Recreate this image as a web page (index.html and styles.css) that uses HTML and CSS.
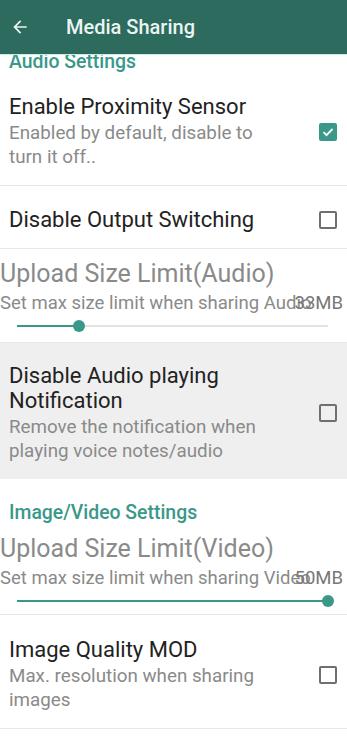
FILE: index.html
```html
<!DOCTYPE html>
<html lang="en">
<head>
    <meta charset="UTF-8">
    <meta name="viewport" content="width=device-width, initial-scale=1.0">
    <title>Media Sharing</title>
    <link rel="stylesheet" href="styles.css">
</head>
<body>
    <div class="app-bar">
        <svg class="back-icon" viewBox="0 0 24 24" width="20" height="20">
            <path d="M20 11H7.83l5.59-5.59L12 4l-8 8 8 8 1.41-1.41L7.83 13H20v-2z" fill="currentColor"/>
        </svg>
        <div class="app-title">Media Sharing</div>
    </div>

    <div class="pref-list">
        <div class="category first">Audio Settings</div>

        <div class="pref-item first">
            <div class="pref-text">
                <div class="pref-title">Enable Proximity Sensor</div>
                <div class="pref-summary">Enabled by default, disable to turn it off..</div>
            </div>
            <div class="checkbox checked">
                <svg viewBox="0 0 18 18" width="18" height="18"><path d="M4.5 9.2l3 3 6-6.2" fill="none" stroke="#fff" stroke-width="1.8"/></svg>
            </div>
        </div>

        <div class="pref-item single">
            <div class="pref-text">
                <div class="pref-title">Disable Output Switching</div>
            </div>
            <div class="checkbox"></div>
        </div>

        <div class="seek-item audio">
            <div class="seek-title">Upload Size Limit(Audio)</div>
            <div class="seek-summary">
                Set max size limit when sharing Audio
                <span class="seek-value">33MB</span>
            </div>
            <div class="slider">
                <div class="slider-fill" style="width: 20%"></div>
                <div class="slider-thumb" style="left: 20%"></div>
            </div>
        </div>

        <div class="pref-item pressed">
            <div class="pref-text">
                <div class="pref-title">Disable Audio playing Notification</div>
                <div class="pref-summary">Remove the notification when playing voice notes/audio</div>
            </div>
            <div class="checkbox"></div>
        </div>

        <div class="category">Image/Video Settings</div>

        <div class="seek-item video">
            <div class="seek-title">Upload Size Limit(Video)</div>
            <div class="seek-summary">
                Set max size limit when sharing Video
                <span class="seek-value">50MB</span>
            </div>
            <div class="slider">
                <div class="slider-fill" style="width: 100%"></div>
                <div class="slider-thumb" style="left: 100%"></div>
            </div>
        </div>

        <div class="pref-item last">
            <div class="pref-text">
                <div class="pref-title">Image Quality MOD</div>
                <div class="pref-summary">Max. resolution when sharing images</div>
            </div>
            <div class="checkbox"></div>
        </div>
    </div>
</body>
</html>
```

FILE: styles.css
```css
body {
    margin: 0;
    padding: 0;
    width: 347px;
    height: 742px;
    overflow: hidden;
    background: #fff;
    font-family: Roboto, 'Noto Sans', sans-serif;
    color: #222;
}

.app-bar {
    position: relative;
    z-index: 2;
    height: 54px;
    display: flex;
    align-items: center;
    background: #2c6b5d;
    color: #eaf5f1;
    border-bottom: 1px solid #c6ece4;
}

.back-icon {
    margin-left: 10px;
    margin-right: 36px;
}

.app-title {
    font-size: 20px;
    font-weight: 500;
}

.pref-list {
    margin-top: -5px;
}

.category {
    padding: 22px 9px 2px;
    font-size: 19.4px;
    line-height: 23px;
    font-weight: 500;
    color: #3a9888;
}

.category.first {
    padding-top: 0;
    padding-bottom: 4px;
}

.pref-item {
    display: flex;
    align-items: center;
    padding: 17px 10px 16px 9px;
    border-bottom: 1px solid #e8e8e8;
}

.pref-item.single {
    padding: 21px 10px 16px 9px;
}

.pref-item.pressed {
    background: #efefef;
    border-bottom: none;
    padding: 20px 10px 16px 9px;
}

.pref-item.last {
    padding: 22px 10px 16px 9px;
}

.pref-text {
    flex: 1;
    padding-right: 40px;
}

.pref-title {
    font-size: 22px;
    line-height: 25px;
    color: #222;
}

.pref-summary {
    margin-top: 3px;
    font-size: 18.8px;
    line-height: 23.5px;
    color: #8a8a8a;
}

.checkbox {
    width: 14px;
    height: 14px;
    border: 2px solid #6f6f6f;
    border-radius: 2px;
    flex-shrink: 0;
}

.checkbox.checked {
    width: 18px;
    height: 18px;
    border: none;
    background: #3a9888;
    display: flex;
    align-items: center;
    justify-content: center;
}

.seek-item {
    padding: 10px 0 15px;
    border-bottom: 1px solid #e8e8e8;
}

.seek-item.video {
    padding-top: 8px;
    padding-bottom: 12px;
}

.seek-title {
    font-size: 25px;
    line-height: 30px;
    color: #8a8a8a;
}

.seek-summary {
    position: relative;
    margin-top: 2px;
    font-size: 18.5px;
    line-height: 24px;
    color: #8a8a8a;
    white-space: nowrap;
}

.seek-value {
    position: absolute;
    right: 4px;
    top: 0;
    color: #777;
}

.slider {
    position: relative;
    height: 2px;
    margin: 10px 19px 0 17px;
    background: #e2e2e2;
}

.slider-fill {
    height: 2px;
    background: #3a9888;
}

.slider-thumb {
    position: absolute;
    top: -5px;
    width: 12px;
    height: 12px;
    margin-left: -6px;
    border-radius: 50%;
    background: #3a9888;
}
```
